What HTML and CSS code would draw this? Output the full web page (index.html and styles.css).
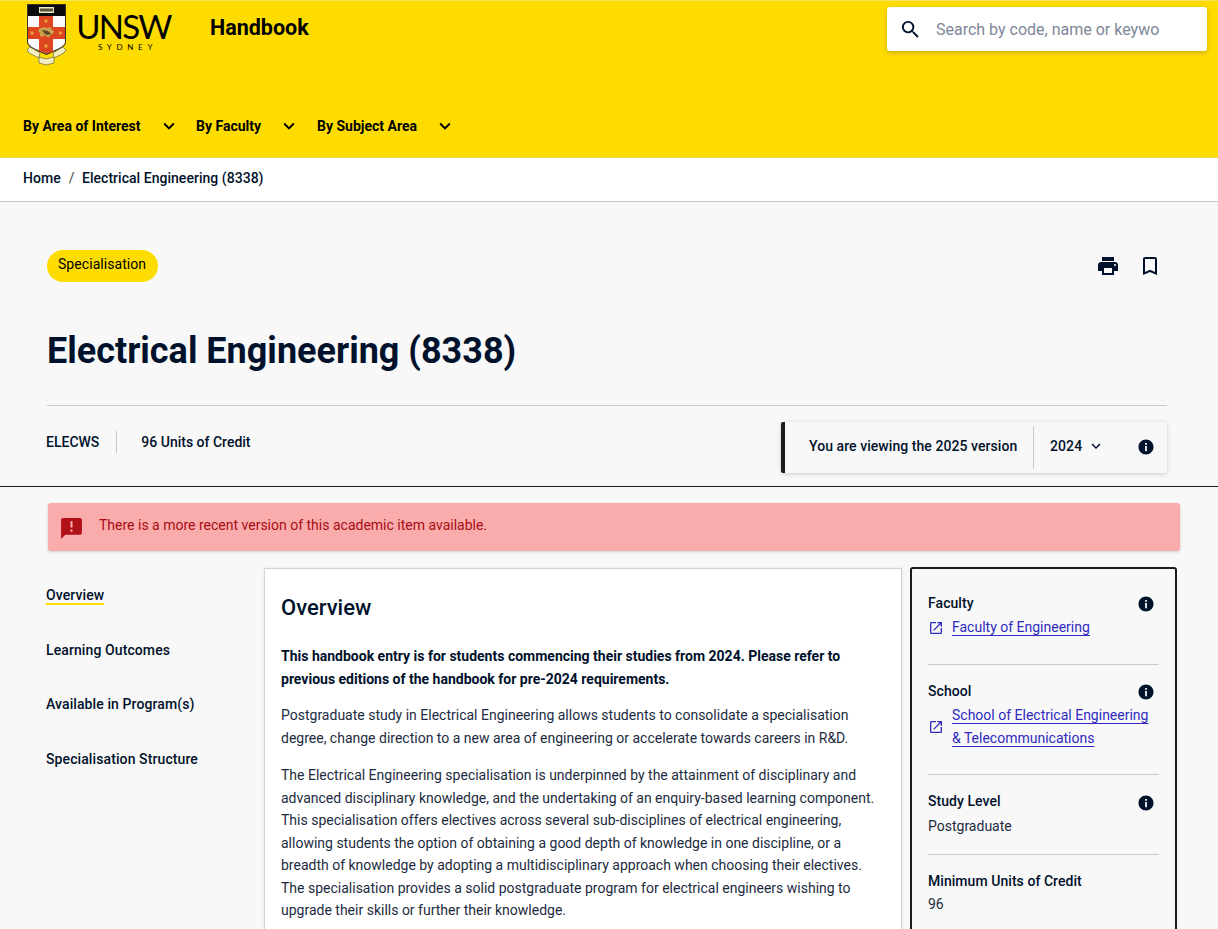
FILE: index.html
```html
<!DOCTYPE html>
<html lang="en">
<head>
<meta charset="utf-8">
<title>Electrical Engineering (8338)</title>
<link rel="stylesheet" href="styles.css">
</head>
<body>
<svg class="defs" width="0" height="0" aria-hidden="true">
  <symbol id="info" viewBox="0 0 24 24"><path d="M12 2C6.48 2 2 6.48 2 12s4.48 10 10 10 10-4.48 10-10S17.52 2 12 2zm1.2 15.500h-2.400v-6.700h2.400zm0-8.600h-2.400V6.500h2.400z"/></symbol>
  <symbol id="chev" viewBox="0 0 24 24"><path d="M7.410 8.590 12 13.170l4.590-4.580L18 10l-6 6-6-6z"/></symbol>
  <symbol id="ext" viewBox="0 0 24 24"><path d="M19 19H5V5h7V3H5a2 2 0 0 0-2 2v14a2 2 0 0 0 2 2h14a2 2 0 0 0 2-2v-7h-2v7zM14 3v2h3.590l-9.830 9.830 1.410 1.410L19 6.410V10h2V3h-7z"/></symbol>
</svg>
<header class="site-header">
  <div class="brand-row">
    <div class="brand">
      <svg class="crest" viewBox="0 0 40 62" aria-hidden="true">
        <path d="M0 0h39v38c0 5-8 8-19.500 13C8 46 0 43 0 38z" fill="#3a3320"/>
        <path d="M1 1h37v11H1z" fill="#0b0b0b"/>
        <path d="M12 3h15v6H12z" fill="#eee7c8"/>
        <path d="M13 4.500h13v3H13z" fill="#57533c"/>
        <path d="M1 12h37v26c0 4-7 7-18.500 11.500C8 45 1 42 1 38z" fill="#fbfbfb"/>
        <path d="M12 12h14v11h12v12H26v13l-6.500 1.500L12 47V35H1V23h11z" fill="#dd4420"/>
        <path d="M12 25c3-2 6-2 8-1l3-1 2 3 2 1-1 3-3 1v2h-3l-2-2-3 2-2-1v-3l-2-2z" fill="#c7a14c"/>
        <path d="M15 26l6 1 3 3-4 1-3-2z" fill="#5b4520"/>
        <circle cx="19" cy="17" r="1.700" fill="#e8a33a"/><circle cx="19" cy="42" r="1.700" fill="#e8a33a"/>
        <circle cx="5" cy="29" r="1.700" fill="#e8a33a"/><circle cx="33.500" cy="29" r="1.700" fill="#e8a33a"/>
        <path d="M0 46l3-3 10 6-1 5-10-5z" fill="#f4eec0" stroke="#6b6440" stroke-width=".7"/>
        <path d="M39 46l-3-3-10 6 1 5 10-5z" fill="#f4eec0" stroke="#6b6440" stroke-width=".7"/>
        <path d="M12 53l7 2 8-2v6l-8 2-7-2z" fill="#f4eec0" stroke="#6b6440" stroke-width=".7"/>
      </svg>
      <div class="wordmark">
        <span class="wordmark-main">UNSW</span>
        <span class="wordmark-sub">SYDNEY</span>
      </div>
    </div>
    <a class="handbook" href="#">Handbook</a>
    <div class="search">
      <svg class="search-icon" viewBox="0 0 24 24"><path d="M15.500 14h-.79l-.28-.27A6.470 6.470 0 0 0 16 9.500 6.500 6.500 0 1 0 9.500 16c1.610 0 3.090-.59 4.230-1.570l.27.28v.79l5 4.990L20.490 19l-4.990-5zm-6 0C7.010 14 5 11.990 5 9.500S7.010 5 9.500 5 14 7.010 14 9.500 11.990 14 9.500 14z"/></svg>
      <span class="search-text">Search by code, name or keywo</span>
    </div>
  </div>
  <nav class="main-nav">
    <a class="nav-item nav-area" href="#">By Area of Interest<svg class="nav-chev"><use href="#chev"/></svg></a>
    <a class="nav-item nav-faculty" href="#">By Faculty<svg class="nav-chev"><use href="#chev"/></svg></a>
    <a class="nav-item nav-subject" href="#">By Subject Area<svg class="nav-chev"><use href="#chev"/></svg></a>
  </nav>
</header>
<div class="crumbs"><a href="#">Home</a><span class="crumb-sep">/</span><a href="#">Electrical Engineering (8338)</a></div>
<section class="hero">
  <div class="hero-top">
    <span class="pill">Specialisation</span>
    <div class="hero-actions">
      <svg class="print" viewBox="0 0 24 24"><path d="M19 8H5c-1.660 0-3 1.340-3 3v6h4v4h12v-4h4v-6c0-1.660-1.340-3-3-3zm-3 11H8v-5h8v5zm3-7c-.55 0-1-.45-1-1s.45-1 1-1 1 .45 1 1-.45 1-1 1zm-1-9H6v4h12V3z"/></svg>
      <svg class="bookmark" viewBox="0 0 24 24"><path d="M17 3H7c-1.100 0-1.990.9-1.990 2L5 21l7-3 7 3V5c0-1.100-.9-2-2-2zm0 15-5-2.180L7 18V5h10v13z"/></svg>
    </div>
  </div>
  <h1 class="title">Electrical Engineering (8338)</h1>
  <div class="hero-meta">
    <div class="meta-left"><span class="code">ELECWS</span><span class="uoc">96 Units of Credit</span></div>
    <div class="version">
      <span class="version-text">You are viewing the 2025 version</span>
      <span class="version-select">2024<svg class="version-chev"><use href="#chev"/></svg></span>
      <svg class="info version-info"><use href="#info"/></svg>
    </div>
  </div>
</section>
<div class="page-body">
  <div class="alert">
    <svg class="alert-icon" viewBox="0 0 24 24"><path d="M20 2H4c-1.100 0-1.990.9-1.990 2L2 22l4-4h14c1.100 0 2-.9 2-2V4c0-1.100-.9-2-2-2zm-7 9h-2V5h2v6zm0 4h-2v-2h2v2z"/></svg>
    <span>There is a more recent version of this academic item available.</span>
  </div>
  <div class="columns">
    <nav class="side-nav">
      <a class="side-link active" href="#">Overview</a>
      <a class="side-link" href="#">Learning Outcomes</a>
      <a class="side-link" href="#">Available in Program(s)</a>
      <a class="side-link" href="#">Specialisation Structure</a>
    </nav>
    <main class="card">
      <h2 class="card-title">Overview</h2>
      <p class="lead">This handbook entry is for students commencing their studies from 2024. Please refer to previous editions of the handbook for pre-2024 requirements.</p>
      <p class="intro">Postgraduate study in Electrical Engineering allows students to consolidate a specialisation degree, change direction to a new area of engineering or accelerate towards careers in R&amp;D.</p>
      <p>The Electrical Engineering specialisation is underpinned by the attainment of disciplinary and advanced disciplinary knowledge, and the undertaking of an enquiry-based learning component. This specialisation offers electives across several sub-disciplines of electrical engineering, allowing students the option of obtaining a good depth of knowledge in one discipline, or a breadth of knowledge by adopting a multidisciplinary approach when choosing their electives. The specialisation provides a solid postgraduate program for electrical engineers wishing to upgrade their skills or further their knowledge.</p>
    </main>
    <aside class="facts">
      <div class="fact fact-faculty">
        <div class="fact-head"><span>Faculty</span><svg class="info"><use href="#info"/></svg></div>
        <div class="fact-link"><svg class="ext"><use href="#ext"/></svg><a href="#">Faculty of Engineering</a></div>
      </div>
      <div class="fact fact-school">
        <div class="fact-head"><span>School</span><svg class="info"><use href="#info"/></svg></div>
        <div class="fact-link"><svg class="ext"><use href="#ext"/></svg><a href="#">School of Electrical Engineering &amp; Telecommunications</a></div>
      </div>
      <div class="fact fact-level">
        <div class="fact-head"><span>Study Level</span><svg class="info"><use href="#info"/></svg></div>
        <div class="fact-value">Postgraduate</div>
      </div>
      <div class="fact fact-credit">
        <div class="fact-head"><span>Minimum Units of Credit</span></div>
        <div class="fact-value">96</div>
      </div>
    </aside>
  </div>
</div>
</body>
</html>
```
FILE: styles.css
```css
* { box-sizing: border-box; }
html, body { height: 929px; overflow: hidden; }
body { margin: 0; background: #f8f8f8; font-family: Roboto, "Liberation Sans", sans-serif; font-size: 14px; color: #00112b; }
a { color: inherit; text-decoration: none; }
.defs { display: block; height: 0; }
svg { fill: currentColor; display: block; flex: none; }

.site-header { height: 158px; background: #ffdc00; border-top: 1px solid #f7e35a; border-bottom: 1px solid #ecd84a; display: flex; flex-direction: column; color: #000; }
.brand-row { display: flex; align-items: flex-start; height: 108px; }
.brand { display: flex; margin-left: 27px; padding-top: 3px; }
.crest { width: 40px; height: 62px; }
.wordmark { margin-left: 9px; margin-top: 9px; width: 96px; display: flex; flex-direction: column; align-items: center; }
.wordmark-main { font-family: "Lato", sans-serif; font-size: 33px; line-height: 27px; letter-spacing: -1.700px; font-weight: 400; white-space: nowrap; margin-left: -1px; }
.wordmark-sub { font-family: "Lato", sans-serif; font-size: 8px; line-height: 9px; letter-spacing: 4.700px; margin-top: 3px; margin-left: 7px; white-space: nowrap; }
.handbook { margin-left: 38px; margin-top: 13px; font-size: 21.500px; line-height: 28px; font-weight: 700; }
.search { margin-left: auto; margin-right: 11px; margin-top: 6px; width: 320px; height: 44px; background: #fff; border-radius: 3px; box-shadow: 0 2px 5px rgba(0,0,0,.2); display: flex; align-items: center; padding-left: 12px; }
.search-icon { width: 23px; height: 23px; color: #00112b; }
.search-text { margin-left: 14px; font-size: 16px; color: #7e8799; }

.main-nav { display: flex; height: 34px; padding-left: 23px; }
.nav-item { display: flex; align-items: center; font-size: 14px; font-weight: 700; height: 34px; }
.nav-chev { width: 22px; height: 22px; margin-left: 17px; }
.nav-area { width: 173px; }
.nav-faculty { width: 121px; }

.crumbs { height: 44px; background: #fff; border-bottom: 1px solid #c9c9c9; padding-left: 23px; display: flex; align-items: center; font-size: 14px; font-weight: 500; color: #00112b; padding-bottom: 4px; letter-spacing: .03px; }
.crumb-sep { margin: 0 7.500px 0 8px; font-weight: 400; color: #444; }

.hero { height: 285px; padding: 48px 51px 0 47px; border-bottom: 1px solid #1b1b1b; background: #f8f8f8; }
.hero-top { display: flex; justify-content: space-between; align-items: flex-start; height: 32px; }
.pill { background: #ffdc00; border-radius: 16px; height: 32px; padding: 0 12px 5px 11px; display: flex; align-items: center; font-size: 14px; color: #000; letter-spacing: .06px; }
.hero-actions { display: flex; gap: 18px; margin-right: 5px; margin-top: 4px; color: #00112b; }
.print { width: 24px; height: 24px; }
.bookmark { width: 24px; height: 24px; }
.title { margin: 46px 0 0; height: 78px; font-size: 36px; line-height: 46px; font-weight: 700; color: #00112b; border-bottom: 1px solid #c9c9c9; }
.hero-meta { display: flex; justify-content: space-between; align-items: flex-start; }
.meta-left { display: flex; align-items: center; margin-top: 25px; font-weight: 500; font-size: 14px; height: 22px; }
.code { padding-right: 17px; border-right: 1px solid #c9c9c9; margin-right: 24px; line-height: 22px; margin-left: -1px; }
.version { margin-top: 16px; width: 386px; height: 51px; border-left: 4px solid #1b1b1b; border-radius: 2px; background: #f8f8f8; box-shadow: 0 1px 4px rgba(0,0,0,.18); display: flex; align-items: center; font-weight: 500; }
.version-text { margin-left: 24px; width: 225px; height: 43px; line-height: 41px; border-right: 1px solid #c9c9c9; letter-spacing: .06px; }
.version-select { margin-left: 16px; margin-bottom: 3px; display: flex; align-items: center; letter-spacing: .1px; }
.version-chev { width: 18px; height: 18px; margin-left: 5px; }
.info { width: 18px; height: 18px; color: #00112b; }
.version-info { margin-left: auto; margin-right: 12px; margin-bottom: 2px; }

.page-body { padding: 16px 38px 0 47px; }
.alert { margin-left: 1px; height: 48px; background: #faabab; border-radius: 3px; box-shadow: 0 1px 3px rgba(0,0,0,.18); display: flex; align-items: center; padding: 0 0 4px 11px; color: #a80d14; font-size: 14px; }
.alert-icon { width: 25px; height: 25px; margin-right: 15px; margin-top: 6px; color: #b01116; }
.columns { display: flex; align-items: flex-start; margin-top: 17px; }
.side-nav { width: 217px; display: flex; flex-direction: column; align-items: flex-start; font-weight: 500; padding-top: 17px; margin-left: -1px; }
.side-link { height: 20px; line-height: 20px; margin-bottom: 34.500px; letter-spacing: .1px; }
.side-link.active { border-bottom: 2px solid #ffdc00; }
.card { width: 638px; height: 400px; background: #fff; border: 1px solid #d4d4d4; padding: 24px 16px 0; margin-left: 1px; box-shadow: 0 0 3px rgba(0,0,0,.1); font-size: 14px; line-height: 22.500px; color: #1c2b40; }
.card-title { margin: 0 0 22px; font-size: 22px; line-height: 30px; font-weight: 500; color: #00112b; }
.card p { margin: 0; }
.card .lead { font-weight: 700; color: #00112b; margin-bottom: 14px; }
.card .intro { margin-bottom: 15px; }
.facts { width: 267px; height: 400px; margin-left: 8px; margin-top: -1px; border: 2px solid #1b1b1b; border-radius: 3px; padding: 0 16px; background: #f8f8f8; flex: none; }
.fact { border-bottom: 1px solid #c9c9c9; }
.fact-head { display: flex; justify-content: space-between; align-items: center; font-weight: 500; font-size: 14px; line-height: 20px; height: 20px; color: #00112b; letter-spacing: .05px; }
.fact-head .info { margin-right: 4px; margin-top: 2px; }
.fact-level .fact-head .info { margin-top: 4px; }
.fact-link { display: flex; align-items: center; margin-top: 3px; color: #2f2ac0; }
.fact-link a { text-decoration: underline; text-underline-offset: 3px; text-decoration-thickness: 1px; line-height: 23px; flex: 1; padding-right: 8px; }
.ext { width: 16px; height: 16px; margin-right: 8px; }
.fact-value { margin-top: 4px; line-height: 23px; color: #1c2b40; }
.fact-faculty { padding: 24px 0 25px; }
.fact-school { padding: 16px 0 24px; }
.fact-level { padding: 16px 0 16px; }
.fact-credit { padding: 16px 0 0; border-bottom: 0; }
.fact-credit .fact-value { margin-top: 2px; }
```
